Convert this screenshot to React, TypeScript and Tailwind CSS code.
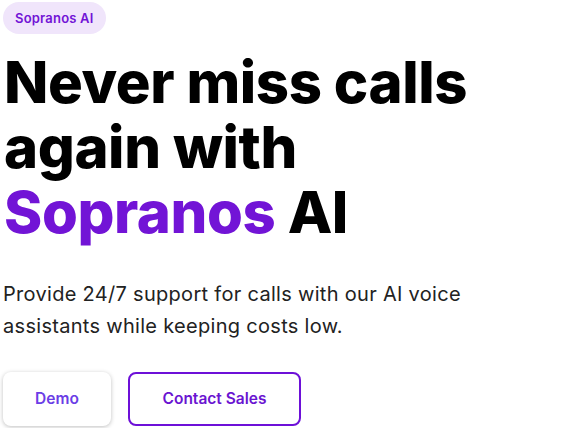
export default function App() {
  return (
    <section className="min-h-screen bg-white px-[3px] pt-[2px]">
      <div className="flex flex-col items-start font-['Inter',sans-serif]">
        <span className="rounded-full bg-[#f0e5fb] px-[12px] py-[7px] text-[13px] font-semibold leading-[18px] tracking-[0.2px] text-[#7214d6]">
          Sopranos AI
        </span>
        <h1 className="mt-[16px] pl-[1px] text-[58px] font-extrabold leading-[65px] tracking-[-0.4px] text-black">
          Never miss calls
          <br />
          again with
          <br />
          <span className="text-[#7214d6]">Sopranos</span> AI
        </h1>
        <p className="mt-[33px] text-[20px] leading-[32px] tracking-[0.3px] text-[#222222]">
          Provide 24/7 support for calls with our AI voice
          <br />
          assistants while keeping costs low.
        </p>
        <div className="mt-[30px] flex gap-[17px]">
          <button className="h-[54px] w-[108px] rounded-lg bg-white text-[15.5px] font-semibold text-[#6b3de6] shadow-[0_1px_4px_rgba(0,0,0,0.25)]">
            Demo
          </button>
          <button className="h-[54px] w-[173px] rounded-lg border-2 border-[#6d10d8] bg-white text-[15.5px] font-semibold text-[#6a14d1]">
            Contact Sales
          </button>
        </div>
      </div>
    </section>
  )
}
